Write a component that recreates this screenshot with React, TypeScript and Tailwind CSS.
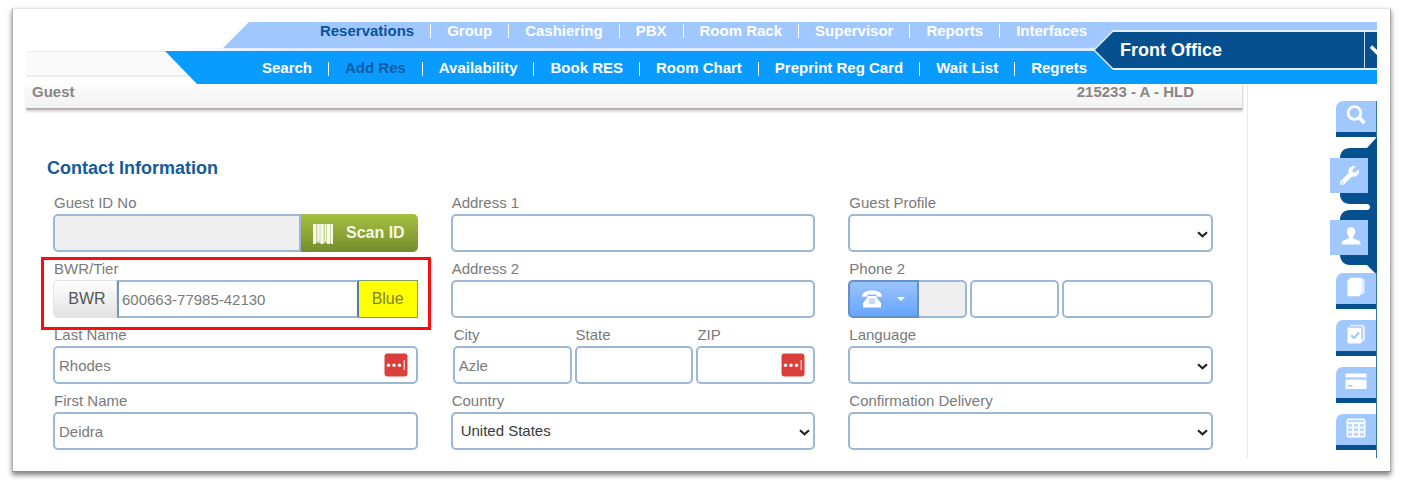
import React from "react";
import { FaWrench } from "react-icons/fa";

const mainNav = ["Reservations", "Group", "Cashiering", "PBX", "Room Rack", "Supervisor", "Reports", "Interfaces"];
const subNav = ["Search", "Add Res", "Availability", "Book RES", "Room Chart", "Preprint Reg Card", "Wait List", "Regrets"];

const box = "h-[38px] w-full min-w-0 border-2 border-[#9db8d6] bg-white px-1 text-[15px] text-[#7a7a7a] outline-none";

function NavItems({ items, active, activeClass }: { items: string[]; active: string; activeClass: string }) {
  return (
    <ul className="flex items-center gap-4">
      {items.map((item, i) => (
        <li key={item} className="flex items-center gap-4 whitespace-nowrap">
          {i > 0 && <span className="h-[14px] w-px bg-white" />}
          <a href="#" aria-current={item === active ? "page" : undefined} className={item === active ? activeClass : "text-white"}>
            {item}
          </a>
        </li>
      ))}
    </ul>
  );
}

function Field({ id, label, className = "", children }: { id: string; label: string; className?: string; children: React.ReactNode }) {
  return (
    <div className={`min-w-0 ${className}`}>
      <label htmlFor={id} className="mb-px block h-5 pl-px text-[15px] leading-5 whitespace-nowrap text-[#7a7a7a]">
        {label}
      </label>
      {children}
    </div>
  );
}

function SelectBox({ id, value = "" }: { id: string; value?: string }) {
  return (
    <div className="relative">
      <select id={id} defaultValue={value} className="h-[38px] w-full appearance-none rounded-[5px] border-2 border-[#9db8d6] bg-white px-2 text-[15px] text-[#3a3a3a] outline-none">
        <option value={value}>{value}</option>
      </select>
      <svg className="pointer-events-none absolute top-[17px] right-[5px] h-[7px] w-[11px]" viewBox="0 0 11 7" fill="none" stroke="#222" strokeWidth="2.2">
        <path d="M1 1.2l4.5 4 4.5-4" />
      </svg>
    </div>
  );
}

function FillBadge() {
  return (
    <svg className="pointer-events-none absolute top-[7px] right-[10px] h-6 w-6" viewBox="0 0 24 24">
      <rect x="0.5" y="0.5" width="23" height="23" rx="3" fill="#d9403b" />
      <circle cx="4.5" cy="12.3" r="1.7" fill="#fff" />
      <circle cx="10" cy="12.3" r="1.7" fill="#fff" />
      <circle cx="15.5" cy="12.3" r="1.7" fill="#fff" />
      <rect x="19.5" y="7" width="1.5" height="10" fill="#f6b9b6" />
    </svg>
  );
}

function SearchIcon() {
  return (
    <svg className="h-5 w-5" viewBox="0 0 20 20" fill="none" stroke="#fff">
      <circle cx="8.500" cy="8" r="6.300" strokeWidth="2.800" />
      <path d="M13 12.500l5.500 5.500" strokeWidth="3.800" />
    </svg>
  );
}

function UserIcon() {
  return (
    <svg className="h-5 w-5" viewBox="0 0 20 20" fill="#fff">
      <path d="M10 1.2c-2.700 0-4.200 1.700-4.200 4.300 0 2 .7 3.700 1.900 4.800v2.200L1.800 14.700c-.8.400-1.200 1-1.200 1.900v2h18.800v-2c0-.9-.4-1.500-1.200-1.900l-5.900-2.200v-2.200c1.200-1.100 1.900-2.800 1.900-4.800 0-2.600-1.500-4.300-4.200-4.300z" />
    </svg>
  );
}

function PagesIcon() {
  return (
    <svg className="h-5 w-5" viewBox="0 0 20 20">
      <path d="M7 2h11.500v14l-3 2H7z" fill="#e3efff" />
      <path d="M4.500 .8h11v14.200h-1.500v4.200H1.500V3.800z" fill="#fff" />
    </svg>
  );
}

function ChecklistIcon() {
  return (
    <svg className="h-5 w-5" viewBox="0 0 20 20">
      <path d="M4 .8h13l2 2v13l-2 2H4z" fill="#e3efff" />
      <rect x="1.500" y="3" width="14" height="16.500" rx="1.500" fill="#fff" />
      <path d="M3.500 3.200h11.500l1 1v11" fill="none" stroke="#a0c8ff" strokeWidth="1.300" />
      <path d="M5.200 11.200l2.800 2.800 5-5.500" fill="none" stroke="#a0c8ff" strokeWidth="2.200" />
    </svg>
  );
}

function CardIcon() {
  return (
    <svg className="h-5 w-[22px]" viewBox="0 0 22 20">
      <path d="M.5 2.500h21v4H.5zM.5 8.500h21v9.500H.5z" fill="#fff" />
      <path d="M3 14.800h4.500" stroke="#a0c8ff" strokeWidth="1.600" />
    </svg>
  );
}

function CalculatorIcon() {
  return (
    <svg className="h-5 w-5" viewBox="0 0 20 20">
      <rect x="1.300" y="1.300" width="17.400" height="17.400" rx="1.500" fill="#bcd8ff" stroke="#fff" strokeWidth="1.500" />
      <path d="M2 5.200h16M2 9.500h16M2 14h16M6.800 5.200v13.500M13 5.200v13.500" stroke="#fff" strokeWidth="1.700" />
    </svg>
  );
}

function SideTab({ label, children }: { label: string; children: React.ReactNode }) {
  return (
    <button aria-label={label} className="flex h-9 w-10 items-center justify-center rounded-tl-[7px] border-b-[5px] border-[#06508f] bg-[#a0c8ff] pb-1">
      {children}
    </button>
  );
}

export default function App() {
  return (
    <div className="px-3 pt-2 pb-4 font-['Liberation_Sans',Arial,sans-serif]">
      <div className="mr-[-1px] border border-x-[#b0b0b0] border-t-[#e4e4e4] border-b-[#8c8c8c] bg-white p-[13px] shadow-[0_3px_5px_rgba(0,0,0,0.5)]">
        <header className="relative text-[15px] font-bold">
          <nav aria-label="Main" className="ml-[197px] flex h-[26px] justify-end bg-[#a0c8ff] pr-[290px] leading-[18px] [clip-path:polygon(26px_0,100%_0,100%_100%,0_100%)]">
            <div className="h-[18px]">
              <NavItems items={mainNav} active="Reservations" activeClass="text-[#0b5399]" />
            </div>
          </nav>
          <div className="h-[3px] bg-linear-to-r from-white from-10% to-[#dcebff] to-20%" />
          <div className="grid">
            <div className="h-[26px] border-t border-b-2 border-[#ededed] bg-[#fafafa] [grid-area:1/1]" />
            <nav aria-label="Reservations" className="ml-[139px] flex h-[33px] items-center justify-end bg-[#0a9bff] pt-[2px] pr-[290px] [clip-path:polygon(0_0,100%_0,100%_100%,32px_100%)] [grid-area:1/1]">
              <NavItems items={subNav} active="Add Res" activeClass="text-[#0a5ca8]" />
            </nav>
          </div>
          <button className="absolute top-[8px] right-0 flex h-10 w-[284px] overflow-hidden bg-[#e3efff] py-[2px] pl-[2px] text-left text-[18px] font-bold text-white [clip-path:polygon(20px_0,100%_0,100%_100%,20px_100%,0_50%)]">
            <span className="flex h-9 w-full items-center bg-[#06508f] pl-[25px] [clip-path:polygon(18px_0,100%_0,100%_100%,18px_100%,0_50%)]">
              <span className="flex-1">Front Office</span>
              <span className="flex h-full w-[13px] items-center overflow-hidden border-l border-[#c8dcf0] pl-[5px]">
                <svg className="h-[10px] w-[14px] shrink-0" viewBox="0 0 14 10" fill="none" stroke="#fff" strokeWidth="3.500">
                  <path d="M1 1.500l6 6 6-6" />
                </svg>
              </span>
            </span>
          </button>
        </header>

        <div className="flex">
          <main className="min-w-0 flex-1 border-r border-[#e8e8e8] pb-2">
            <div className="mr-1 flex h-[26px] justify-between border-r border-b-2 border-r-[#dcdcdc] border-b-[#b8b0b0] bg-linear-to-b from-[#fcfcfc] to-[#f2f2f2] pr-[48px] pl-[6px] text-[15px] leading-4 font-bold text-[#8a8583] shadow-[0_2px_2px_rgba(80,60,60,0.2)]">
              <span>Guest</span>
              <span>215233 - A - HLD</span>
            </div>
            <h1 className="mt-[46px] pl-[21px] text-[18px] leading-6 font-bold text-[#165a99]">Contact Information</h1>
            <form className="mt-[13px] grid grid-cols-3 gap-x-[33px] gap-y-[7px] pr-[34px] pl-[27px]">
              <Field id="guest-id" label="Guest ID No">
                <div className="flex">
                  <input id="guest-id" readOnly className="h-[38px] min-w-0 flex-1 rounded-l-[5px] border-2 border-[#9db8d6] bg-[#efefef] px-1 text-[15px] outline-none" />
                  <button type="button" className="flex h-[38px] w-[117px] items-center justify-between rounded-r-[5px] bg-linear-to-b from-[#a5c142] to-[#768c2c] pr-[13px] pl-3 text-[16px] font-bold text-[#f6f8e8]">
                    <svg className="mt-[2px] h-5 w-5" viewBox="0 0 20 20">
                      <path d="M0 0h20v19H0z" fill="#c9d79b" />
                      <path d="M0 0h3v20H0zM4.500 0h2v17h-2zM7.500 0h3v20h-3zM12 0h1v17h-1zM14 0h3v20h-3zM18 0h2v20h-2z" fill="#f9fbf0" />
                    </svg>
                    Scan ID
                  </button>
                </div>
              </Field>
              <Field id="address1" label="Address 1">
                <input id="address1" className={`${box} rounded-[5px]`} />
              </Field>
              <Field id="profile" label="Guest Profile">
                <SelectBox id="profile" />
              </Field>

              <Field id="bwr" label="BWR/Tier" className="relative">
                <div className="flex">
                  <button type="button" className="h-[38px] w-16 rounded-l-[5px] border border-[#e2e2e2] bg-linear-to-b from-white to-[#e2e2e2] pl-1 text-[16px] text-[#555]">
                    BWR
                  </button>
                  <input id="bwr" defaultValue="600663-77985-42130" className="h-[38px] min-w-0 flex-1 border-2 border-[#9db8d6] border-r-[#4d7ba8] border-l-[#6f97c0] bg-white px-[3px] text-[15px] text-[#7a7a7a] outline-none" />
                  <output htmlFor="bwr" className="flex h-[38px] w-[59px] items-center justify-center border border-l-0 border-[#7f9c6a] bg-[#ffff00] text-[16px] text-[#80803c]">
                    Blue
                  </output>
                </div>
                <span className="pointer-events-none absolute -top-[2px] -right-[13px] -bottom-[12px] -left-[12px] border-[3px] border-[#fb0d0d]" />
              </Field>
              <Field id="address2" label="Address 2">
                <input id="address2" className={`${box} rounded-[5px]`} />
              </Field>
              <Field id="phone2" label="Phone 2">
                <div className="flex">
                  <button type="button" aria-label="Phone type" className="flex h-[38px] w-[71px] items-center justify-between rounded-l-[5px] border-2 border-[#6591c2] bg-linear-to-b from-[#9ac3fd] to-[#66a5fb] pr-3 pl-3">
                    <svg className="h-[18px] w-5" viewBox="0 0 20 18">
                      <path d="M0 6.800C0 2.600 4 .5 10 .5s10 2.100 10 6.300H14.500V4.500h-9v2.300z" fill="#fff" />
                      <path d="M6.500 6h7l5.500 7v4.500H1V13z" fill="#fff" />
                      <path d="M7 8.500h6v5.500H7z" fill="#c3dcfd" />
                    </svg>
                    <svg className="h-1 w-2" viewBox="0 0 8 4" fill="#fff">
                      <path d="M0 0h8L4 4z" />
                    </svg>
                  </button>
                  <input aria-label="Country code" readOnly className="h-[38px] w-12 rounded-r-[5px] border-2 border-l-0 border-[#9db8d6] bg-[#efefef] outline-none" />
                  <input id="phone2" className="ml-[3px] h-[38px] w-[89px] rounded-[5px] border-2 border-[#9db8d6] bg-white px-1 text-[15px] outline-none" />
                  <input aria-label="Phone number" className="ml-[3px] h-[38px] min-w-0 flex-1 rounded-[5px] border-2 border-[#9db8d6] bg-white px-1 text-[15px] outline-none" />
                </div>
              </Field>

              <Field id="last" label="Last Name">
                <div className="relative">
                  <input id="last" defaultValue="Rhodes" className={`${box} rounded-[5px]`} />
                  <FillBadge />
                </div>
              </Field>
              <div className="grid grid-cols-3 gap-x-[3px] pl-[2px]">
                <Field id="city" label="City">
                  <input id="city" defaultValue="Azle" className={`${box} rounded-[5px]`} />
                </Field>
                <Field id="state" label="State">
                  <input id="state" className={`${box} rounded-[5px]`} />
                </Field>
                <Field id="zip" label="ZIP">
                  <div className="relative">
                    <input id="zip" className={`${box} rounded-[5px]`} />
                    <FillBadge />
                  </div>
                </Field>
              </div>
              <Field id="language" label="Language">
                <SelectBox id="language" />
              </Field>

              <Field id="first" label="First Name">
                <input id="first" defaultValue="Deidra" className={`${box} rounded-[5px]`} />
              </Field>
              <Field id="country" label="Country">
                <SelectBox id="country" value="United States" />
              </Field>
              <Field id="delivery" label="Confirmation Delivery">
                <SelectBox id="delivery" />
              </Field>
            </form>
          </main>

          <aside className="mt-[17px] flex w-[129px] flex-col items-end border-r border-[#3a76ad]">
            <SideTab label="Search">
              <SearchIcon />
            </SideTab>
            <div className="relative -mr-px flex h-[136px] w-[47px] flex-col items-start gap-[27px] pt-[21px]">
              <svg className="absolute inset-0 h-[136px] w-[47px]" viewBox="0 0 47 136" fill="#06508f">
                <path d="M47 0L37 11H20C14 11 10 15 10 21V57C10 63 14 67 20 67H37C41 67 41 73 37 73H20C14 73 10 77 10 83V117C10 124 14 128 20 128H37L45 136H47z" />
              </svg>
              <button aria-label="Tools" className="relative flex h-[35px] w-[38px] items-center justify-center bg-[#a0c8ff] text-[19px] text-white">
                <FaWrench />
              </button>
              <button aria-label="Guest" className="relative flex h-[35px] w-[38px] items-center justify-center bg-[#a0c8ff] pb-1 pl-1">
                <UserIcon />
              </button>
            </div>
            <div className="flex flex-col gap-[11px]">
              <SideTab label="Copy">
                <PagesIcon />
              </SideTab>
              <SideTab label="Checklist">
                <ChecklistIcon />
              </SideTab>
              <SideTab label="Payment">
                <CardIcon />
              </SideTab>
              <SideTab label="Calculator">
                <CalculatorIcon />
              </SideTab>
            </div>
          </aside>
        </div>
      </div>
    </div>
  );
}
